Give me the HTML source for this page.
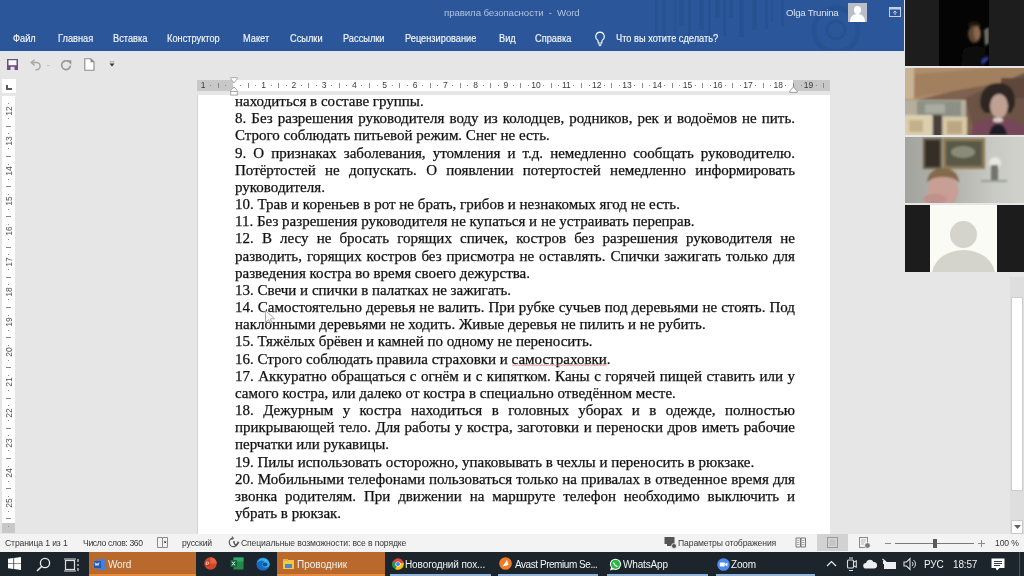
<!DOCTYPE html>
<html><head><meta charset="utf-8">
<style>
*{margin:0;padding:0;box-sizing:border-box}
html,body{width:1024px;height:576px;overflow:hidden;-webkit-font-smoothing:antialiased;background:#e6e6e6;font-family:"Liberation Sans",sans-serif;position:relative}
.a{position:absolute}
#title{left:0;top:0;width:904px;height:53px;background:#2b579a}
.tab{position:absolute;top:33px;font-size:10.4px;letter-spacing:0px;color:#f4f6fa;-webkit-text-stroke:0.15px #f4f6fa;white-space:nowrap;line-height:12px;transform:scaleX(.89);transform-origin:0 0}
#ruler{left:197px;top:80px;width:633px;height:11px;background:#fff}
.rn{position:absolute;top:-1px;width:16px;text-align:center;font-size:8.5px;line-height:12px;color:#3a3a3a}
.rt{position:absolute;top:3px;width:1px;height:5px;background:#8a8a8a}
.rd{position:absolute;top:5px;width:1px;height:1px;background:#8a8a8a}
#vruler{left:2px;top:96px;width:13px;height:437px;background:#fff}
.vn{position:absolute;left:0;width:13px;height:16px}
.vn b{position:absolute;left:-1px;top:4px;width:16px;text-align:center;font-weight:normal;font-size:8.5px;line-height:8px;color:#555;transform:rotate(-90deg)}
.vt{position:absolute;left:4px;width:5px;height:1px;background:#8a8a8a}
.vd{position:absolute;left:6px;width:1px;height:1px;background:#8a8a8a}
#page{left:197px;top:95px;width:633px;height:439px;background:#fff;border-left:1px solid #d4d4d4}
.ln{position:absolute;left:235px;font-family:"Liberation Serif",serif;font-size:15px;color:#111;-webkit-text-stroke:0.25px #111;white-space:nowrap;line-height:17px}
.j{width:560px;text-align:justify;text-align-last:justify;white-space:normal}
.ln u{text-decoration:none}
#status{left:0;top:534px;width:1024px;height:18px;background:#f3f3f3;font-size:9px;color:#383838;white-space:nowrap}
#status .t{position:absolute;top:3.5px;line-height:11px;font-size:8.6px;letter-spacing:-0.12px}
#task{left:0;top:552px;width:1024px;height:24px;background:#1d252c}
.tb{position:absolute;top:0;height:24px}
.tt{position:absolute;top:7px;font-size:10px;letter-spacing:-0.15px;line-height:12px;color:#f2f2f2;white-space:nowrap}
.ul{position:absolute;top:21.5px;height:2.5px;background:#8fb3d9}
#zoom{left:904px;top:0;width:120px;height:272px;background:#e6e6e6}
</style></head><body><div style="position:absolute;left:0;top:0;width:1024px;height:576px;will-change:transform">
<div id="title" class="a">
  <div class="a" style="left:0;top:51px;width:904px;height:2px;background:#dfe6f0"></div>
  <svg class="a" style="left:640px;top:0" width="264" height="50" viewBox="0 0 264 50">
    <g fill="#224c8a" opacity="0.45"><rect x="15" y="0" width="3" height="36"/><rect x="22" y="0" width="4" height="37"/><rect x="34" y="0" width="2" height="37"/><rect x="39" y="0" width="5" height="26"/><rect x="48" y="0" width="3" height="40"/><rect x="59" y="0" width="5" height="30"/><rect x="68" y="0" width="3" height="38"/><rect x="75" y="0" width="5" height="18"/><rect x="83" y="0" width="3" height="36"/><rect x="89" y="0" width="4" height="18"/><rect x="99" y="0" width="5" height="37"/><rect x="112" y="0" width="5" height="30"/><rect x="125" y="0" width="3" height="29"/><rect x="131" y="0" width="2" height="22"/><rect x="141" y="0" width="3" height="26"/></g>
    <g fill="none" stroke="#224c8a" opacity="0.45"><circle cx="196" cy="30" r="22" stroke-width="5"/><circle cx="196" cy="30" r="9" stroke-width="3"/></g>
  </svg>
  <div class="a" style="left:444px;top:7px;font-size:9.7px;letter-spacing:-0.1px;line-height:12px;color:#b1c2de;white-space:nowrap">правила безопасности&nbsp; -&nbsp; Word</div>
  <div class="a" style="left:786px;top:7px;font-size:9.7px;letter-spacing:-0.25px;line-height:12px;color:#d7e0ee;white-space:nowrap">Olga Trunina</div>
  <div class="a" style="left:848px;top:3px;width:19px;height:19px;background:#b9bec7;overflow:hidden">
    <div class="a" style="left:6px;top:3px;width:7px;height:8px;border-radius:50%;background:#fff"></div>
    <div class="a" style="left:2px;top:11px;width:15px;height:12px;border-radius:7px 7px 0 0;background:#fff"></div>
  </div>
  <svg class="a" style="left:889px;top:7px" width="12" height="10" viewBox="0 0 12 10"><rect x="0.5" y="0.5" width="11" height="9" fill="none" stroke="#c5d1e6" stroke-width="1"/><rect x="0.5" y="0.5" width="11" height="2" fill="#c5d1e6"/><path d="M6 4v4M4.3 5.7L6 4l1.7 1.7" fill="none" stroke="#c5d1e6" stroke-width="1"/></svg>
  <div class="tab" style="left:13px">Файл</div>
  <div class="tab" style="left:58px">Главная</div>
  <div class="tab" style="left:113px">Вставка</div>
  <div class="tab" style="left:167px">Конструктор</div>
  <div class="tab" style="left:243px">Макет</div>
  <div class="tab" style="left:290px">Ссылки</div>
  <div class="tab" style="left:343px">Рассылки</div>
  <div class="tab" style="left:405px">Рецензирование</div>
  <div class="tab" style="left:499px">Вид</div>
  <div class="tab" style="left:535px">Справка</div>
  <svg class="a" style="left:594px;top:31px" width="12" height="16" viewBox="0 0 12 16"><path d="M6 1.2a4.3 4.3 0 0 0-2.6 7.7c.5.5.8 1.2.8 1.9v1.2h3.6v-1.2c0-.7.3-1.4.8-1.9A4.3 4.3 0 0 0 6 1.2z" fill="none" stroke="#f0f3f8" stroke-width="1.2"/><path d="M4.3 13.2h3.4M4.8 14.6h2.4" stroke="#f0f3f8" stroke-width="1"/></svg>
  <div class="tab" style="left:616px">Что вы хотите сделать?</div>
</div>
<!-- QAT -->
<svg class="a" style="left:7px;top:59px" width="11" height="11" viewBox="0 0 11 11"><rect x="0" y="0" width="11" height="11" fill="#6e4d85"/><rect x="1.5" y="1.2" width="8" height="5" fill="#fbf8fd"/><rect x="3.5" y="7.8" width="4" height="3.2" fill="#e8def0"/></svg>
<svg class="a" style="left:29px;top:59px" width="24" height="13" viewBox="0 0 24 13"><path d="M3 3.5h4.5a3.6 3.6 0 0 1 0 7.2H6.5" fill="none" stroke="#a6a6a6" stroke-width="1.4"/><path d="M5.5 0.8L2.2 3.6 5.5 6.4" fill="none" stroke="#a6a6a6" stroke-width="1.4"/><rect x="18" y="6" width="2.5" height="1" fill="#c0c0c0"/></svg>
<svg class="a" style="left:60px;top:59px" width="12" height="12" viewBox="0 0 12 12"><path d="M8.6 2.6A4.4 4.4 0 1 0 10.4 6.5" fill="none" stroke="#969696" stroke-width="1.6"/><path d="M6.5 1.2h4.8v4.6z" fill="#969696"/></svg>
<svg class="a" style="left:84px;top:58px" width="11" height="13" viewBox="0 0 11 13"><path d="M0.8 0.8h6l3.2 3.2v8.2H0.8z" fill="#fff" stroke="#8a8a8a" stroke-width="1.1"/><path d="M6.5 0.8l3.5 3.5H6.5z" fill="#8a8a8a"/></svg>
<svg class="a" style="left:109px;top:61px" width="6" height="7" viewBox="0 0 6 7"><rect x="0.8" y="0.5" width="4.4" height="0.8" fill="#888"/><path d="M0.5 2.5h5L3 5.5z" fill="#333"/></svg>
<!-- ruler corner -->
<div class="a" style="left:2px;top:79px;width:14px;height:14px;background:#fff"><div class="a" style="left:4px;top:6px;width:6px;height:5px;border-left:2px solid #5a5a5a;border-bottom:2px solid #5a5a5a"></div></div>
<div id="page" class="a"></div>
<div id="ruler" class="a">
  <div class="a" style="left:0;top:0;width:36px;height:11px;background:#c8c8c8"></div>
  <div class="a" style="left:596px;top:0;width:37px;height:11px;background:#c8c8c8"></div>
  <span class="rn" style="left:-2.0px">1</span><i class="rd" style="left:13.0px"></i><i class="rt" style="left:20.6px"></i><i class="rd" style="left:28.1px"></i><i class="rd" style="left:43.3px"></i><i class="rt" style="left:50.8px"></i><i class="rd" style="left:58.4px"></i><span class="rn" style="left:58.6px">1</span><i class="rd" style="left:73.6px"></i><i class="rt" style="left:81.1px"></i><i class="rd" style="left:88.7px"></i><span class="rn" style="left:88.9px">2</span><i class="rd" style="left:103.8px"></i><i class="rt" style="left:111.4px"></i><i class="rd" style="left:119.0px"></i><span class="rn" style="left:119.1px">3</span><i class="rd" style="left:134.1px"></i><i class="rt" style="left:141.7px"></i><i class="rd" style="left:149.2px"></i><span class="rn" style="left:149.4px">4</span><i class="rd" style="left:164.4px"></i><i class="rt" style="left:172.0px"></i><i class="rd" style="left:179.5px"></i><span class="rn" style="left:179.7px">5</span><i class="rd" style="left:194.7px"></i><i class="rt" style="left:202.2px"></i><i class="rd" style="left:209.8px"></i><span class="rn" style="left:210.0px">6</span><i class="rd" style="left:224.9px"></i><i class="rt" style="left:232.5px"></i><i class="rd" style="left:240.1px"></i><span class="rn" style="left:240.3px">7</span><i class="rd" style="left:255.2px"></i><i class="rt" style="left:262.8px"></i><i class="rd" style="left:270.4px"></i><span class="rn" style="left:270.5px">8</span><i class="rd" style="left:285.5px"></i><i class="rt" style="left:293.1px"></i><i class="rd" style="left:300.6px"></i><span class="rn" style="left:300.8px">9</span><i class="rd" style="left:315.8px"></i><i class="rt" style="left:323.4px"></i><i class="rd" style="left:330.9px"></i><span class="rn" style="left:331.1px">10</span><i class="rd" style="left:346.1px"></i><i class="rt" style="left:353.6px"></i><i class="rd" style="left:361.2px"></i><span class="rn" style="left:361.4px">11</span><i class="rd" style="left:376.4px"></i><i class="rt" style="left:383.9px"></i><i class="rd" style="left:391.5px"></i><span class="rn" style="left:391.7px">12</span><i class="rd" style="left:406.6px"></i><i class="rt" style="left:414.2px"></i><i class="rd" style="left:421.8px"></i><span class="rn" style="left:421.9px">13</span><i class="rd" style="left:436.9px"></i><i class="rt" style="left:444.5px"></i><i class="rd" style="left:452.0px"></i><span class="rn" style="left:452.2px">14</span><i class="rd" style="left:467.2px"></i><i class="rt" style="left:474.8px"></i><i class="rd" style="left:482.3px"></i><span class="rn" style="left:482.5px">15</span><i class="rd" style="left:497.5px"></i><i class="rt" style="left:505.0px"></i><i class="rd" style="left:512.6px"></i><span class="rn" style="left:512.8px">16</span><i class="rd" style="left:527.8px"></i><i class="rt" style="left:535.3px"></i><i class="rd" style="left:542.9px"></i><span class="rn" style="left:543.1px">17</span><i class="rd" style="left:558.0px"></i><i class="rt" style="left:565.6px"></i><i class="rd" style="left:573.2px"></i><span class="rn" style="left:573.3px">18</span><i class="rd" style="left:588.3px"></i><i class="rt" style="left:595.9px"></i><i class="rd" style="left:603.5px"></i><span class="rn" style="left:603.6px">19</span><i class="rd" style="left:618.6px"></i><i class="rt" style="left:626.2px"></i>
</div>
<!-- indent markers -->
<svg class="a" style="left:230px;top:77px" width="8" height="19" viewBox="0 0 8 19"><path d="M0.7 0.7h6.6v1L4 6 0.7 1.7z" fill="#fff" stroke="#a0a0a0" stroke-width="0.9"/><path d="M4 10L7.3 13.5v1H0.7v-1z" fill="#fff" stroke="#a0a0a0" stroke-width="0.9"/><rect x="0.7" y="14.5" width="6.6" height="3.6" fill="#fff" stroke="#a0a0a0" stroke-width="0.9"/></svg>
<svg class="a" style="left:789px;top:86px" width="9" height="7" viewBox="0 0 9 7"><path d="M4.5 0.8L8.2 5v1.4H0.8V5z" fill="#fff" stroke="#9a9a9a" stroke-width="1"/></svg>
<div id="vruler" class="a">
  <div class="a" style="left:0;top:0;width:13px;height:0px;background:#c8c8c8"></div>
  <div class="a" style="left:0;top:427px;width:13px;height:10px;background:#c8c8c8"></div>
  <i class="vd" style="top:7.0px"></i><span class="vn" style="top:6.6px"><b>12</b></span><i class="vd" style="top:22.2px"></i><i class="vt" style="top:29.7px"></i><i class="vd" style="top:37.3px"></i><span class="vn" style="top:36.8px"><b>13</b></span><i class="vd" style="top:52.3px"></i><i class="vt" style="top:59.9px"></i><i class="vd" style="top:67.5px"></i><span class="vn" style="top:67.0px"><b>14</b></span><i class="vd" style="top:82.5px"></i><i class="vt" style="top:90.1px"></i><i class="vd" style="top:97.7px"></i><span class="vn" style="top:97.2px"><b>15</b></span><i class="vd" style="top:112.8px"></i><i class="vt" style="top:120.3px"></i><i class="vd" style="top:127.8px"></i><span class="vn" style="top:127.4px"><b>16</b></span><i class="vd" style="top:143.0px"></i><i class="vt" style="top:150.5px"></i><i class="vd" style="top:158.0px"></i><span class="vn" style="top:157.6px"><b>17</b></span><i class="vd" style="top:173.1px"></i><i class="vt" style="top:180.7px"></i><i class="vd" style="top:188.2px"></i><span class="vn" style="top:187.8px"><b>18</b></span><i class="vd" style="top:203.4px"></i><i class="vt" style="top:210.9px"></i><i class="vd" style="top:218.5px"></i><span class="vn" style="top:218.0px"><b>19</b></span><i class="vd" style="top:233.6px"></i><i class="vt" style="top:241.1px"></i><i class="vd" style="top:248.6px"></i><span class="vn" style="top:248.2px"><b>20</b></span><i class="vd" style="top:263.8px"></i><i class="vt" style="top:271.3px"></i><i class="vd" style="top:278.9px"></i><span class="vn" style="top:278.4px"><b>21</b></span><i class="vd" style="top:294.0px"></i><i class="vt" style="top:301.5px"></i><i class="vd" style="top:309.1px"></i><span class="vn" style="top:308.6px"><b>22</b></span><i class="vd" style="top:324.1px"></i><i class="vt" style="top:331.7px"></i><i class="vd" style="top:339.2px"></i><span class="vn" style="top:338.8px"><b>23</b></span><i class="vd" style="top:354.4px"></i><i class="vt" style="top:361.9px"></i><i class="vd" style="top:369.5px"></i><span class="vn" style="top:369.0px"><b>24</b></span><i class="vd" style="top:384.6px"></i><i class="vt" style="top:392.1px"></i><i class="vd" style="top:399.6px"></i><span class="vn" style="top:399.2px"><b>25</b></span><i class="vd" style="top:414.8px"></i><i class="vt" style="top:422.3px"></i><i class="vd" style="top:429.9px"></i>
</div>
<div class="ln" style="top:93.16px">находиться в составе группы.</div><div class="ln j" style="top:110.32px">8. Без разрешения руководителя воду из колодцев, родников, рек и водоёмов не пить.</div><div class="ln" style="top:127.48px">Строго соблюдать питьевой режим. Снег не есть.</div><div class="ln j" style="top:144.64px">9. О признаках заболевания, утомления и т.д. немедленно сообщать руководителю.</div><div class="ln j" style="top:161.80px">Потёртостей не допускать. О появлении потертостей немедленно информировать</div><div class="ln" style="top:178.96px">руководителя.</div><div class="ln" style="top:196.12px">10. Трав и кореньев в рот не брать, грибов и незнакомых ягод не есть.</div><div class="ln" style="top:213.28px">11. Без разрешения руководителя не купаться и не устраивать переправ.</div><div class="ln j" style="top:230.44px">12. В лесу не бросать горящих спичек, костров без разрешения руководителя не</div><div class="ln j" style="top:247.60px">разводить, горящих костров без присмотра не оставлять. Спички зажигать только для</div><div class="ln" style="top:264.76px">разведения костра во время своего дежурства.</div><div class="ln" style="top:281.92px">13. Свечи и спички в палатках не зажигать.</div><div class="ln j" style="top:299.08px">14. Самостоятельно деревья не валить. При рубке сучьев под деревьями не стоять. Под</div><div class="ln" style="top:316.24px">наклонными деревьями не ходить. Живые деревья не пилить и не рубить.</div><div class="ln" style="top:333.40px">15. Тяжёлых брёвен и камней по одному не переносить.</div><div class="ln" style="top:350.56px">16. Строго соблюдать правила страховки и <u>самостраховки</u>.</div><div class="ln j" style="top:367.72px">17. Аккуратно обращаться с огнём и с кипятком. Каны с горячей пищей ставить или у</div><div class="ln" style="top:384.88px">самого костра, или далеко от костра в специально отведённом месте.</div><div class="ln j" style="top:402.04px">18. Дежурным у костра находиться в головных уборах и в одежде, полностью</div><div class="ln j" style="top:419.20px">прикрывающей тело. Для работы у костра, заготовки и переноски дров иметь рабочие</div><div class="ln" style="top:436.36px">перчатки или рукавицы.</div><div class="ln" style="top:453.52px">19. Пилы использовать осторожно, упаковывать в чехлы и переносить в рюкзаке.</div><div class="ln j" style="top:470.68px">20. Мобильными телефонами пользоваться только на привалах в отведенное время для</div><div class="ln j" style="top:487.84px">звонка родителям. При движении на маршруте телефон необходимо выключить и</div><div class="ln" style="top:505.00px">убрать в рюкзак.</div>
<svg class="a" style="left:512px;top:364px" width="95" height="3" viewBox="0 0 95 3"><polyline points="0.0,0.5 1.5,2.0 3.0,0.5 4.5,2.0 6.0,0.5 7.5,2.0 9.0,0.5 10.5,2.0 12.0,0.5 13.5,2.0 15.0,0.5 16.5,2.0 18.0,0.5 19.5,2.0 21.0,0.5 22.5,2.0 24.0,0.5 25.5,2.0 27.0,0.5 28.5,2.0 30.0,0.5 31.5,2.0 33.0,0.5 34.5,2.0 36.0,0.5 37.5,2.0 39.0,0.5 40.5,2.0 42.0,0.5 43.5,2.0 45.0,0.5 46.5,2.0 48.0,0.5 49.5,2.0 51.0,0.5 52.5,2.0 54.0,0.5 55.5,2.0 57.0,0.5 58.5,2.0 60.0,0.5 61.5,2.0 63.0,0.5 64.5,2.0 66.0,0.5 67.5,2.0 69.0,0.5 70.5,2.0 72.0,0.5 73.5,2.0 75.0,0.5 76.5,2.0 78.0,0.5 79.5,2.0 81.0,0.5 82.5,2.0 84.0,0.5 85.5,2.0 87.0,0.5 88.5,2.0 90.0,0.5 91.5,2.0 93.0,0.5 94.5,2.0" fill="none" stroke="#e07a7a" stroke-width="0.9"/></svg>
<!-- cursor -->
<svg class="a" style="left:264px;top:309px" width="14" height="16" viewBox="0 0 14 16"><path d="M1.5 1.5v12l3-3 2.2 4.3 1.7-.8-2.1-4.2h4.3z" fill="none" stroke="#a8a8a8" stroke-width="1"/></svg>
<!-- scrollbar -->
<div class="a" style="left:1010px;top:277px;width:14px;height:257px;background:#dedede"></div>
<div class="a" style="left:1011px;top:297px;width:12px;height:194px;background:#fff;border:1px solid #cdcdcd"></div>
<div class="a" style="left:1011px;top:520px;width:12px;height:14px;background:#fff;border:1px solid #c8c8c8"><svg class="a" style="left:2px;top:4px" width="7" height="5" viewBox="0 0 7 5"><path d="M0 0h7L3.5 4z" fill="#606060"/></svg></div>
<div id="status" class="a">
  <div class="t" style="left:5px">Страница 1 из 1</div>
  <div class="t" style="left:83px;letter-spacing:-0.35px">Число слов: 360</div>
  <svg class="a" style="left:157px;top:3px" width="12" height="11" viewBox="0 0 12 11"><path d="M0.5 0.5h5v10h-5z M5.5 0.5h5v10h-5" fill="none" stroke="#8a8a8a" stroke-width="1"/><path d="M7.3 4.3l1.8 1.8m0-1.8l-1.8 1.8" stroke="#333" stroke-width="1"/></svg>
  <div class="t" style="left:182px">русский</div>
  <svg class="a" style="left:228px;top:2px" width="12" height="14" viewBox="0 0 12 14"><path d="M4.5 2.2A4.3 4.3 0 1 0 9.8 5.5" fill="none" stroke="#555" stroke-width="1.2"/><path d="M4 0.5l1.3 1.8-1.8 1.3" fill="none" stroke="#555" stroke-width="1.1"/><circle cx="6" cy="6" r="1" fill="#555"/><path d="M6 7l1.5 2.2 3.5-3" fill="none" stroke="#555" stroke-width="1.3"/></svg>
  <div class="t" style="left:241px">Специальные возможности: все в порядке</div>
  <svg class="a" style="left:664px;top:2px" width="13" height="13" viewBox="0 0 13 13"><rect x="0.5" y="1" width="10" height="7" fill="#555"/><rect x="3" y="8" width="5" height="2" fill="#555"/><circle cx="10" cy="10" r="2.5" fill="#555" stroke="#f3f3f3" stroke-width="0.8"/></svg>
  <div class="t" style="left:678px">Параметры отображения</div>
  <svg class="a" style="left:795px;top:3px" width="12" height="11" viewBox="0 0 12 11"><path d="M1 1h4.5v9H1z M6 1h4.5v9H6z" fill="none" stroke="#777" stroke-width="1"/><path d="M2 3.5h2.5M2 5.5h2.5M2 7.5h2.5M7 3.5h2.5M7 5.5h2.5M7 7.5h2.5" stroke="#999" stroke-width="0.8"/></svg>
  <div class="a" style="left:817px;top:0;width:31px;height:17px;background:#d2d2d2"></div>
  <svg class="a" style="left:827px;top:3px" width="11" height="11" viewBox="0 0 11 11"><rect x="0.5" y="0.5" width="10" height="10" fill="none" stroke="#9a9a9a" stroke-width="1"/><rect x="2.5" y="2.5" width="6" height="6" fill="#c4c4c4"/></svg>
  <svg class="a" style="left:859px;top:3px" width="12" height="12" viewBox="0 0 12 12"><rect x="0.5" y="0.5" width="8" height="10" fill="none" stroke="#8a8a8a" stroke-width="1"/><path d="M2 3h5M2 5h4M2 7h3" stroke="#aaa" stroke-width="0.8"/><circle cx="8.5" cy="8.5" r="2.8" fill="#777" stroke="#f3f3f3" stroke-width="0.8"/></svg>
  <div class="a" style="left:885px;top:9px;width:6px;height:1px;background:#8a8a8a"></div>
  <div class="a" style="left:895px;top:8.5px;width:79px;height:1.5px;background:#7a7a7a"></div>
  <div class="a" style="left:933px;top:4.5px;width:4px;height:9px;background:#5a5a5a"></div>
  <div class="a" style="left:978px;top:9px;width:7px;height:1px;background:#8a8a8a"></div>
  <div class="a" style="left:981px;top:6px;width:1px;height:7px;background:#8a8a8a"></div>
  <div class="t" style="left:995px">100 %</div>
</div>
<div id="task" class="a">
  <svg class="a" style="left:8px;top:5px" width="13" height="13" viewBox="0 0 14 14"><path d="M0 2l5.8-.8V6.6H0zM6.6 1.1L14 0v6.6H6.6zM0 7.4h5.8v5.4L0 12zM6.6 7.4H14V14l-7.4-1z" fill="#fff"/></svg>
  <svg class="a" style="left:36px;top:5px" width="15" height="15" viewBox="0 0 15 15"><circle cx="9" cy="6" r="4.6" fill="none" stroke="#eee" stroke-width="1.3"/><path d="M5.8 9.2L1 14" stroke="#eee" stroke-width="1.5"/></svg>
  <svg class="a" style="left:64px;top:6px" width="16" height="14" viewBox="0 0 16 14"><rect x="1.5" y="2.5" width="9" height="9" fill="none" stroke="#ddd" stroke-width="1.2"/><path d="M0 1h12M0 13h12M14 1v3M14 6v2M14 10v3" stroke="#ddd" stroke-width="1.2"/></svg>
  <div class="tb" style="left:89px;width:107px;background:#b8692b"><div class="ul" style="left:0;width:107px;background:#e58a3a"></div></div>
  <svg class="a" style="left:94px;top:7px" width="12" height="11" viewBox="0 0 12 11"><rect x="3" y="0" width="9" height="11" fill="#4a7ed0"/><rect x="0" y="2" width="7" height="7" fill="#2457b3"/><path d="M1 3.5l1 3 1-2.2 1 2.2 1-3" fill="none" stroke="#fff" stroke-width="0.8"/></svg>
  <div class="tt" style="left:108px">Word</div>
  <svg class="a" style="left:204px;top:5px" width="13" height="13" viewBox="0 0 13 13"><circle cx="6.5" cy="6.5" r="6.2" fill="#d2472a"/><path d="M6.5 0.3A6.2 6.2 0 0 1 12.7 6.5H6.5z" fill="#e8663f"/><rect x="0.8" y="3.8" width="5.2" height="5.4" fill="#b83a20"/><path d="M2.2 8V5h1.6a1.1 1.1 0 0 1 0 2.2H2.2" fill="none" stroke="#f4d0c4" stroke-width="0.9"/></svg>
  <svg class="a" style="left:230px;top:5px" width="14" height="13" viewBox="0 0 14 13"><rect x="3.5" y="0.5" width="10" height="12" fill="#1f8a4c"/><rect x="3.5" y="0.5" width="10" height="4" fill="#33a866"/><rect x="0.5" y="3" width="6.5" height="7" fill="#12633a"/><path d="M2 4.5l3 4m0-4l-3 4" stroke="#e8f4ec" stroke-width="1"/></svg>
  <svg class="a" style="left:256px;top:5px" width="14" height="14" viewBox="0 0 14 14"><circle cx="7" cy="7" r="6.6" fill="#1769c4"/><path d="M0.6 6.2A6.6 6.6 0 0 1 13.6 7.4c0 2-2 3-4 3-2.4 0-3.6-1.4-3.6-3s1.4-2.4 2.6-2.2C7.5 3 3.5 2.8 0.6 6.2z" fill="#36b5e8"/><path d="M13.6 7.4c0 2-2 3-4 3 2 0 3.6-1.2 4-3z M13.3 5.3a6.6 6.6 0 0 1 0.3 2.1c-0.4 2-2 3-4 3 2.5.2 4.2-1.2 3.7-5.1z" fill="#5fd068"/><ellipse cx="9" cy="7.5" rx="2.6" ry="2" fill="#0e4f9c"/></svg>
  <div class="tb" style="left:277px;width:108px;background:#b8692b"><div class="ul" style="left:0;width:108px;background:#e58a3a"></div></div>
  <svg class="a" style="left:283px;top:7px" width="11" height="10" viewBox="0 0 11 10"><rect x="0" y="1" width="11" height="9" fill="#f0c94a"/><rect x="0" y="0" width="5" height="2" fill="#e2b33a"/><rect x="2" y="5" width="7" height="4" fill="#4a88c8"/></svg>
  <div class="tt" style="left:297px;letter-spacing:0px">Проводник</div>
  <div class="ul" style="left:390px;width:101px"></div>
  <svg class="a" style="left:392px;top:6px" width="12" height="12" viewBox="0 0 12 12"><circle cx="6" cy="6" r="5.8" fill="#db4437"/><path d="M6 6L11.5 4.5A5.8 5.8 0 0 1 3 11z" fill="#f4c20d"/><path d="M6 6L3 11A5.8 5.8 0 0 1 .6 3.8z" fill="#0f9d58"/><circle cx="6" cy="6" r="2.6" fill="#fff"/><circle cx="6" cy="6" r="2" fill="#4285f4"/></svg>
  <div class="tt" style="left:405px;letter-spacing:-0.1px">Новогодний пох...</div>
  <div class="ul" style="left:498px;width:100px"></div>
  <svg class="a" style="left:499px;top:5px" width="13" height="13" viewBox="0 0 13 13"><circle cx="6.5" cy="6.5" r="6.3" fill="#f07c26"/><path d="M3.5 9.5l4.5-6.5 1.5 5z" fill="#fff"/></svg>
  <div class="tt" style="left:515px;letter-spacing:-0.45px">Avast Premium Se...</div>
  <div class="ul" style="left:607px;width:101px"></div>
  <svg class="a" style="left:609px;top:6px" width="13" height="13" viewBox="0 0 13 13"><circle cx="6.5" cy="6.3" r="5.6" fill="#fff"/><circle cx="6.5" cy="6.3" r="4.6" fill="#2cb742"/><path d="M1 12.5l1.2-3.5 2.5 2.3z" fill="#fff"/><path d="M4.5 4.5c.5 2 1.8 3.4 4 4" stroke="#fff" stroke-width="1.1" fill="none"/></svg>
  <div class="tt" style="left:623px">WhatsApp</div>
  <div class="ul" style="left:716px;width:99px"></div>
  <svg class="a" style="left:717px;top:6px" width="13" height="13" viewBox="0 0 13 13"><circle cx="6.5" cy="6.5" r="6.3" fill="#4a8cf0"/><rect x="2.8" y="4.5" width="5" height="4" rx="0.8" fill="#fff"/><path d="M8.2 6l2.2-1.5v4L8.2 7z" fill="#fff"/></svg>
  <div class="tt" style="left:731px">Zoom</div>
  <svg class="a" style="left:826px;top:8px" width="11" height="7" viewBox="0 0 11 7"><path d="M1 6l4.5-4.5L10 6" fill="none" stroke="#eee" stroke-width="1.2"/></svg>
  <svg class="a" style="left:846px;top:5px" width="11" height="15" viewBox="0 0 11 15"><rect x="1.5" y="3" width="6" height="8" rx="1" fill="none" stroke="#ddd" stroke-width="1.1"/><path d="M8 5l2.3-1.2v6.4L8 9M3 1h4M3 13.5h4" stroke="#ddd" stroke-width="1.1" fill="none"/></svg>
  <svg class="a" style="left:863px;top:7px" width="14" height="10" viewBox="0 0 14 10"><path d="M3 9.5a2.8 2.8 0 0 1 0-5.6 4 4 0 0 1 7.5-1A3.3 3.3 0 0 1 11 9.5z" fill="#eee"/></svg>
  <svg class="a" style="left:882px;top:6px" width="15" height="12" viewBox="0 0 15 12"><rect x="2" y="4" width="12" height="7" fill="#eee"/><path d="M0.5 1l4 3.5" stroke="#eee" stroke-width="1.2"/><rect x="1" y="3" width="3" height="3" fill="#eee"/></svg>
  <svg class="a" style="left:903px;top:5px" width="13" height="14" viewBox="0 0 13 14"><path d="M1 5h2.5L7 1.5v11L3.5 9H1z" fill="none" stroke="#ddd" stroke-width="1.1"/><path d="M9 5a2.5 2.5 0 0 1 0 4M10.5 3a5 5 0 0 1 0 8" fill="none" stroke="#ddd" stroke-width="1"/></svg>
  <div class="tt" style="left:924px;font-size:10px">РУС</div>
  <div class="tt" style="left:953px;font-size:10px">18:57</div>
  <svg class="a" style="left:991px;top:6px" width="14" height="14" viewBox="0 0 14 14"><path d="M0.5 0.5h13v9.5H8.5L6 12.5 4.5 10H0.5z" fill="#fff"/><path d="M3 3.5h8M3 5.5h8M3 7.5h6" stroke="#1c2630" stroke-width="0.9"/></svg>
  <div class="a" style="left:1019px;top:0;width:1px;height:25px;background:#4a525a"></div>
</div>
<div id="zoom" class="a">
  <div class="a" style="left:1px;top:0;width:119px;height:66px;background:#1d1d1d;overflow:hidden">
    <div class="a" style="left:34px;top:0;width:50px;height:66px;background:#040404"></div>
    <svg class="a" style="left:34px;top:0" width="50" height="66" viewBox="0 0 50 66"><defs><filter id="b1"><feGaussianBlur stdDeviation="1.2"/></filter></defs><g filter="url(#b1)">
      <ellipse cx="35.5" cy="34" rx="6.5" ry="9" fill="#5e4430"/>
      <ellipse cx="38" cy="33" rx="3.5" ry="7" fill="#8a684c"/>
      <path d="M28 26c2-6 12-7 15 0z" fill="#1a120c"/>
      <path d="M45 30l5-3v16l-4 3z" fill="#6d6d68"/>
      <path d="M24 50c4-4 14-5 22-2v18H22z" fill="#0d0d10"/>
      <path d="M43 60l6-4v4l-6 4z" fill="#2f44a0"/>
    </g></svg>
  </div>
  <div class="a" style="left:1px;top:68px;width:119px;height:67px;overflow:hidden;background:#8f6f52">
    <svg class="a" style="left:0;top:0" width="119" height="67" viewBox="0 0 119 67"><defs><filter id="b2" x="-10%" y="-10%" width="120%" height="120%"><feGaussianBlur stdDeviation="1.1"/></filter></defs><g filter="url(#b2)">
      <rect x="-3" y="-3" width="125" height="73" fill="#7e6250"/>
      <path d="M-3 -3H122V4L-3 36z" fill="#b08e6a"/>
      <path d="M10 6L122 -3V10L8 30z" fill="#a2805e"/>
      <path d="M122 4V67H70L60 30z" fill="#6c5244"/>
      <path d="M96 10h26v20H96z" fill="#5e463a"/>
      <path d="M-3 -3h12v34h-12z" fill="#c8b494"/>
      <rect x="-3" y="32" width="64" height="40" fill="#b4ae9c"/>
      <rect x="12" y="33" width="44" height="15" fill="#8c9086"/>
      <rect x="20" y="36" width="20" height="9" fill="#a8ab9e"/>
      <rect x="-3" y="47" width="30" height="25" fill="#dccfae"/>
      <rect x="4" y="52" width="14" height="12" fill="#c4b18c"/>
      <rect x="38" y="49" width="24" height="20" fill="#d6c8a6"/>
      <rect x="42" y="53" width="15" height="13" fill="#bca784"/>
      <rect x="28" y="47" width="9" height="22" fill="#4a403a"/>
      <path d="M76 40c-3-14 4-25 17-25 12 0 18 8 17 22l-4 8H80z" fill="#2e2622"/>
      <ellipse cx="94" cy="38" rx="9" ry="12" fill="#bfa092"/>
      <path d="M66 67c1-12 10-17 27-17s26 5 27 17z" fill="#76475a"/>
      <path d="M84 67c1-7 4-11 9-11s8 4 9 11z" fill="#1e1c28"/>
      <ellipse cx="93" cy="52" rx="5" ry="2.2" fill="#d8d0cc"/>
    </g></svg>
  </div>
  <div class="a" style="left:1px;top:137px;width:119px;height:66px;overflow:hidden;background:#b0b0aa">
    <svg class="a" style="left:0;top:0" width="119" height="66" viewBox="0 0 119 66"><defs><linearGradient id="g3" x1="0" x2="1"><stop offset="0" stop-color="#a4a49e"/><stop offset="0.45" stop-color="#b6b6b0"/><stop offset="0.75" stop-color="#cacac4"/><stop offset="1" stop-color="#d2d2cd"/></linearGradient><filter id="b3"><feGaussianBlur stdDeviation="1"/></filter></defs>
      <rect width="119" height="66" fill="url(#g3)"/>
      <g filter="url(#b3)">
      <rect x="18" y="1" width="19" height="31" fill="#6a604e"/>
      <rect x="20" y="3" width="15" height="27" fill="#352f25"/>
      <rect x="38" y="1" width="42" height="31" fill="#8c7a58"/>
      <rect x="41" y="4" width="36" height="25" fill="#5a5846"/>
      <ellipse cx="58" cy="15" rx="12" ry="6" fill="#8a8c78"/>
      <ellipse cx="38" cy="54" rx="15" ry="18" fill="#c89f94"/>
      <path d="M22 46c0-10 8-15 16-15s16 5 16 15c-3-4-8-6-16-6s-13 2-16 6z" fill="#846a4c"/>
      <ellipse cx="30" cy="62" rx="12" ry="5" fill="#c0908a"/>
      <circle cx="90" cy="26" r="6" fill="#e6e6e2"/>
      <rect x="86" y="28" width="7" height="15" fill="#70746d"/>
      <rect x="76" y="43" width="26" height="2" fill="#9a9c96"/>
      </g>
    </svg>
  </div>
  <div class="a" style="left:1px;top:205px;width:119px;height:67px;background:#1c1c1c;overflow:hidden">
    <div class="a" style="left:25px;top:0;width:67px;height:67px;background:#fbfbf5;overflow:hidden">
      <div class="a" style="left:20px;top:16px;width:27px;height:27px;border-radius:50%;background:#d4d4cc"></div>
      <div class="a" style="left:2px;top:45px;width:63px;height:50px;border-radius:50% 50% 0 0;background:#d4d4cc"></div>
    </div>
  </div>
</div>
</div></body></html>
